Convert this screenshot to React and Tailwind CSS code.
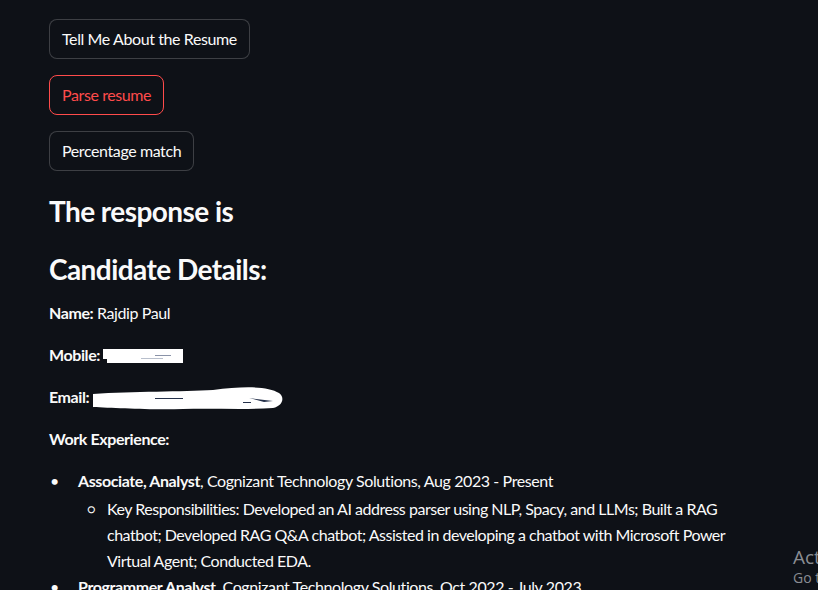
const FONT = { fontFamily: '"Source Sans Pro", Lato, "Noto Sans", sans-serif' };

function ActionButton({ label, danger }) {
  return (
    <button
      type="button"
      className={
        danger
          ? 'rounded-lg border border-[#ff4b4b] bg-[#0e1117] px-3 py-[7px] text-base leading-[24px] tracking-[-0.025em] text-[#ff4b4b]'
          : 'rounded-lg border border-[#fafafa33] bg-[#0e1117] px-3 py-[7px] text-base leading-[24px] tracking-[-0.025em] text-[#fafafa]'
      }
    >
      {label}
    </button>
  );
}

export default function App() {
  return (
    <div className="relative h-[590px] w-[818px] overflow-hidden bg-[#0e1117] text-[#fafafa]" style={FONT}>
      <div className="px-[49px] pt-[19px]">
        <div className="flex flex-col items-start gap-4">
          <ActionButton label="Tell Me About the Resume" />
          <ActionButton label="Parse resume" danger />
          <ActionButton label="Percentage match" />
        </div>

        <h3 className="mt-[23px] text-[28px] font-bold leading-[34px] tracking-[-0.02em]">The response is</h3>
        <h3 className="mt-[24px] text-[28px] font-bold leading-[34px] tracking-[-0.02em]">Candidate Details:</h3>

        <div className="mt-[14px] text-base leading-[26px] tracking-[-0.025em]">
          <p className="mb-4">
            <span className="font-bold">Name:</span> Rajdip Paul
          </p>
          <p className="relative mb-4">
            <span className="font-bold">Mobile:</span>
            <svg width="82" height="20" viewBox="0 0 82 20" className="absolute left-[54px] top-[2px]">
              <rect x="0" y="5" width="80" height="10" fill="#ffffff" />
              <rect x="4" y="10" width="76" height="9" fill="#ffffff" />
              <rect x="52" y="11" width="16" height="1" fill="#8a93a8" />
              <rect x="38" y="14" width="22" height="1" fill="#b8bfcc" />
            </svg>
          </p>
          <p className="relative mb-4">
            <span className="font-bold">Email:</span>
            <svg width="190" height="30" viewBox="0 0 190 30" className="absolute left-[44px] top-[-1px]">
              <path
                d="M0 11 C40 8 90 9 120 7 C150 3 175 3 186 10 C192 14 190 23 180 25 C150 27 120 25 90 26 C60 27 20 25 0 24 Z"
                fill="#ffffff"
              />
              <rect x="62" y="15" width="28" height="1" fill="#24304a" />
              <path d="M156 15 L180 18 L171 19 Z" fill="#24304a" />
              <rect x="150" y="19" width="8" height="1" fill="#24304a" />
            </svg>
          </p>
          <p className="mb-4 font-bold">Work Experience:</p>

          <ul className="flex flex-col">
            <li className="flex">
              <span className="w-[29px] shrink-0 pl-[1px]">•</span>
              <div>
                <div>
                  <span className="font-bold">Associate, Analyst</span>, Cognizant Technology Solutions, Aug 2023 - Present
                </div>
                <ul className="pt-[2px]">
                  <li className="flex">
                    <span className="w-[29px] shrink-0 pl-[9px] text-[13px]">○</span>
                    <div className="tracking-[-0.03em]">
                      <span className="block">Key Responsibilities: Developed an AI address parser using NLP, Spacy, and LLMs; Built a RAG</span>
                      <span className="block">chatbot; Developed RAG Q&amp;A chatbot; Assisted in developing a chatbot with Microsoft Power</span>
                      <span className="block">Virtual Agent; Conducted EDA.</span>
                    </div>
                  </li>
                </ul>
              </div>
            </li>
            <li className="flex">
              <span className="w-[29px] shrink-0 pl-[1px]">•</span>
              <div>
                <span className="font-bold">Programmer Analyst</span>, Cognizant Technology Solutions, Oct 2022 - July 2023
              </div>
            </li>
          </ul>
        </div>
      </div>

      <div
        className="pointer-events-none absolute left-[793px] top-[545px] whitespace-nowrap text-[#8a8d93]"
        style={{ fontFamily: '"Segoe UI", "Open Sans", sans-serif' }}
      >
        <div className="text-[19px] leading-[24px]">Activate Windows</div>
        <div className="text-[14px] leading-[18px]">Go to Settings to activate Windows.</div>
      </div>
    </div>
  );
}
